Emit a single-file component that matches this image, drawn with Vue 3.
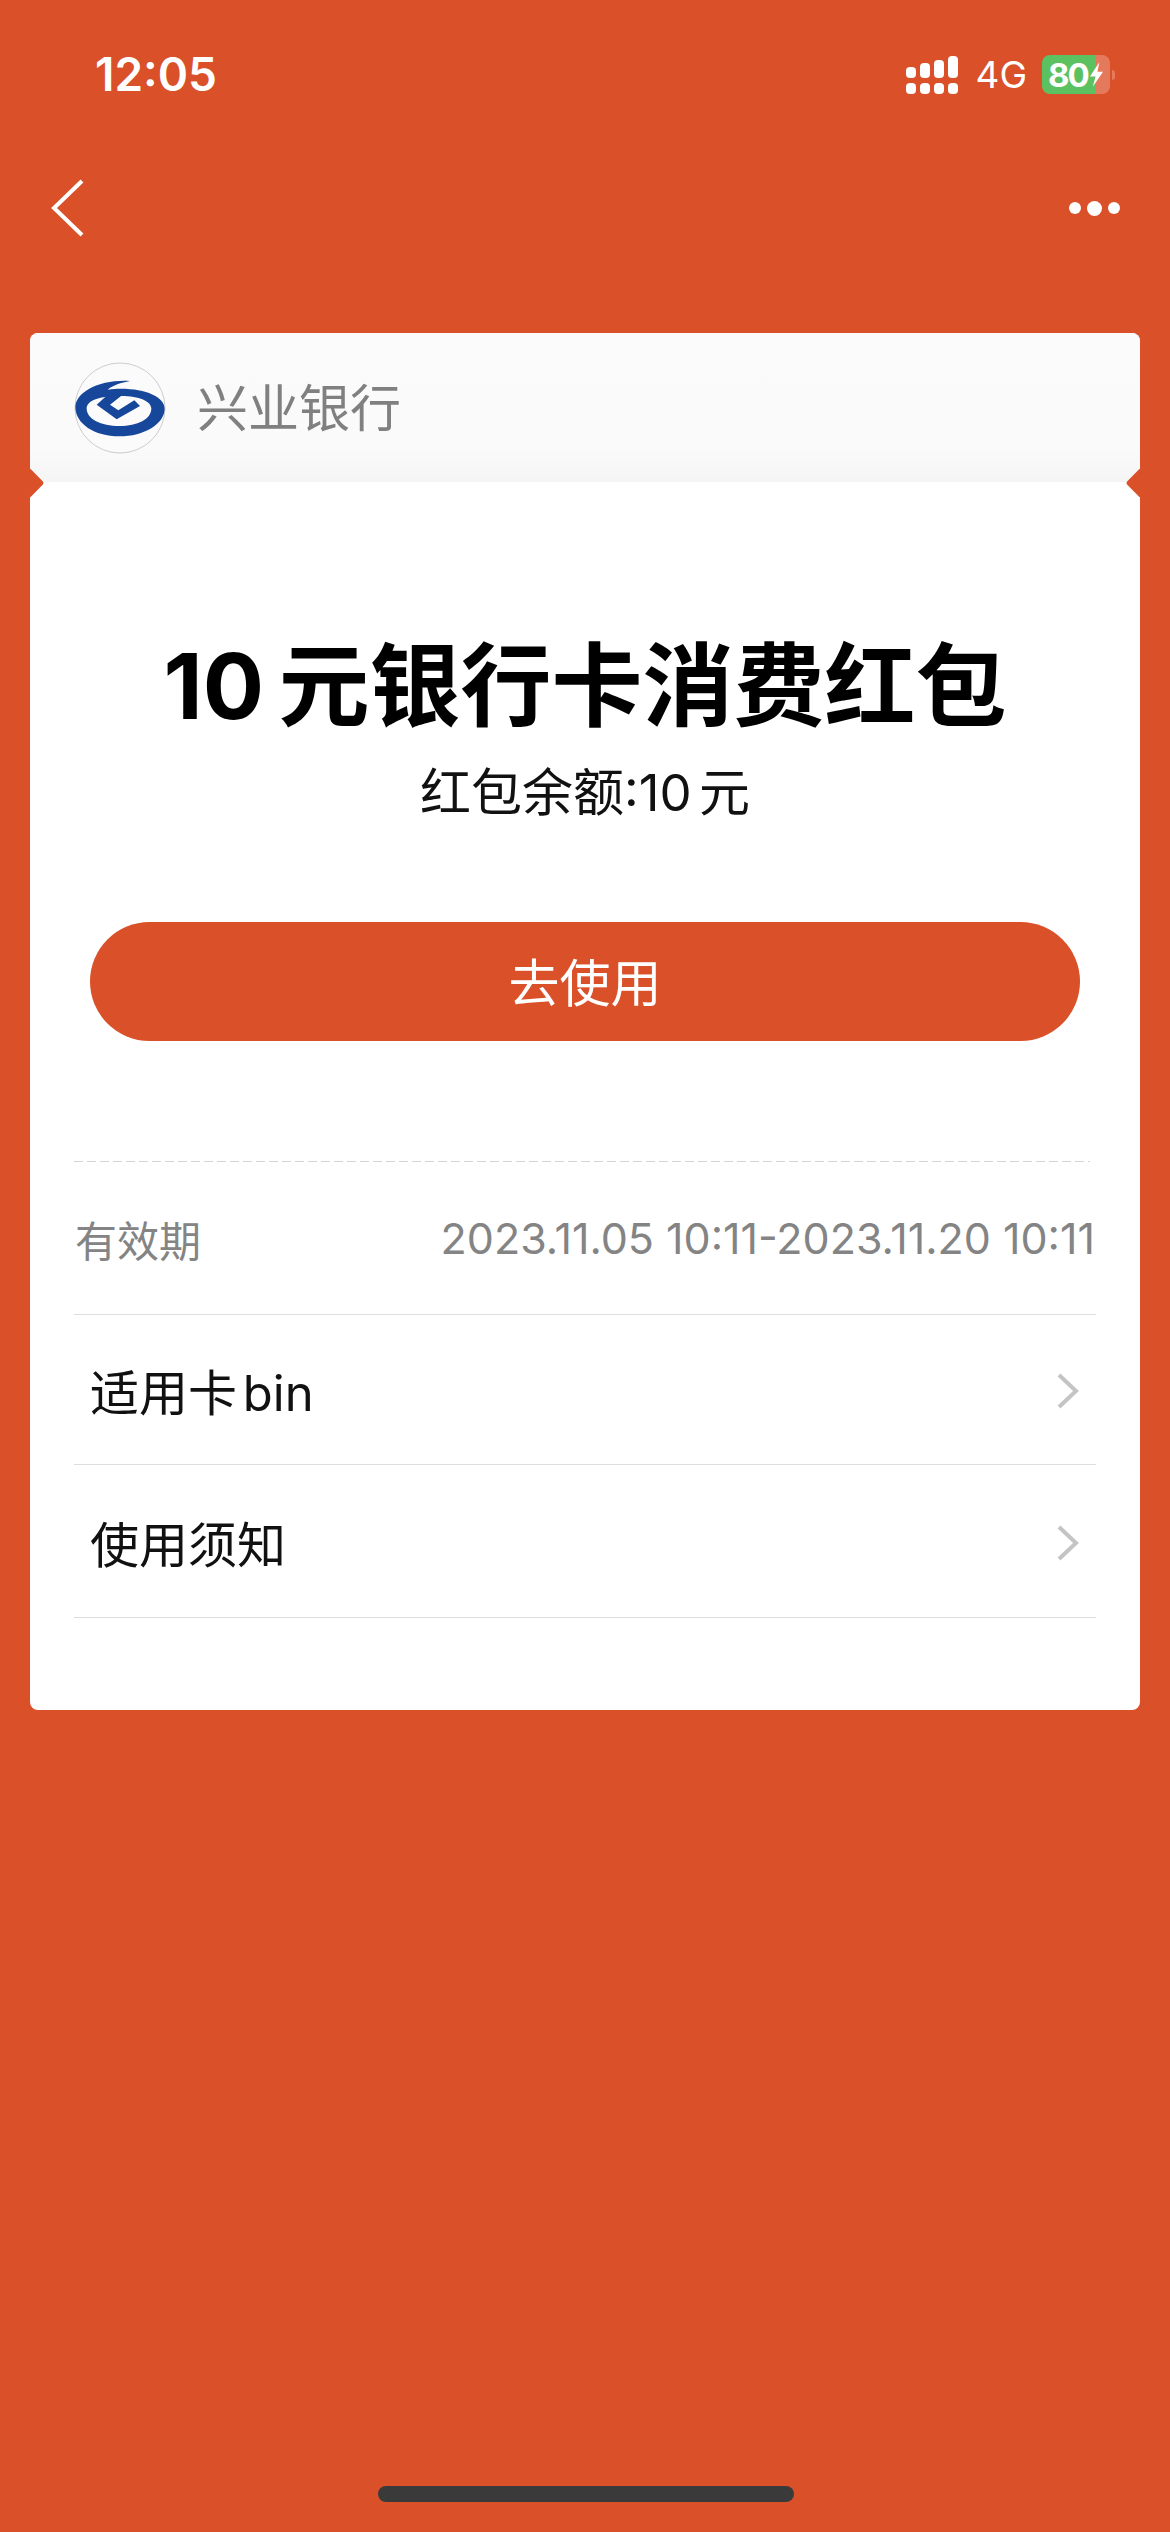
<script setup>
const upperBars = [11, 15, 18, 22];
const rows = [
  { label: '适用卡 bin' },
  { label: '使用须知' },
];
</script>

<template>
  <div class="page">
    <div class="status-bar">
      <span class="time">12:05</span>
      <div class="status-right">
        <div class="signal">
          <div v-for="(h, i) in upperBars" :key="i" class="signal-col">
            <i class="bar" :style="{ height: h + 'px' }"></i>
            <i class="bar dot"></i>
          </div>
        </div>
        <span class="network">4G</span>
        <div class="battery">
          <span class="battery-num">80</span>
          <svg class="bolt" width="15" height="25" viewBox="0 0 16 26">
            <path d="M11 0 L1 15 H7 L4 26 L15 10 H9 Z" fill="#fff" />
          </svg>
        </div>
        <i class="battery-nub"></i>
      </div>
    </div>

    <div class="nav">
      <svg width="36" height="60" viewBox="0 0 36 60" fill="none">
        <path d="M33 3 L5 30 L33 57" stroke="#fff" stroke-width="4" />
      </svg>
      <div class="more">
        <i class="more-dot"></i>
        <i class="more-dot big"></i>
        <i class="more-dot"></i>
      </div>
    </div>

    <div class="card">
      <div class="card-head">
        <svg class="logo" width="92" height="92" viewBox="24 20 276 276">
          <circle cx="162" cy="158" r="135" fill="#fbfbfb" stroke="#b5b5b5" stroke-width="2" />
          <path
            d="M28 155 C30 110 100 72 192 77 C165 82 140 90 125 103 C140 101 150 100 165 100 C240 100 296 125 296 160 C296 205 235 243 160 243 C85 243 28 205 28 155 Z M62 160 C62 190 105 212 160 212 C215 212 256 190 256 160 C256 138 220 122 165 122 C100 122 62 135 62 160 Z"
            fill="#17479a"
            fill-rule="evenodd"
          />
          <path d="M130 114 L170 118 L132 148 L157 165 L205 135 L222 152 L152 192 L92 148 Z" fill="#17479a" />
        </svg>
        <span class="bank-name">兴业银行</span>
      </div>

      <div class="card-body">
        <h1 class="title"><span class="title-num">10 </span>元银行卡消费红包</h1>
        <p class="balance">红包余额:10 元</p>
        <button class="use-btn">去使用</button>
        <div class="dashed"></div>
        <div class="row validity">
          <span class="validity-label">有效期</span>
          <span class="validity-date">2023.11.05 10:11-2023.11.20 10:11</span>
        </div>
        <div v-for="row in rows" :key="row.label" class="row link">
          <span>{{ row.label }}</span>
          <svg class="chevron" width="22" height="36" viewBox="0 0 22 36" fill="none">
            <path d="M2 2 L19 18 L2 34" stroke="#c4c4c4" stroke-width="4" />
          </svg>
        </div>
      </div>
    </div>

    <div class="home-indicator"></div>
  </div>
</template>

<style>
html,
body {
  margin: 0;
  background: #d95029;
}
</style>

<style scoped>
.page {
  width: 1170px;
  height: 2532px;
  background: #d95029;
  position: relative;
  overflow: hidden;
  font-family: Inter, "Noto Sans CJK SC", sans-serif;
}

.status-bar {
  height: 148px;
  padding: 0 55px 0 95px;
  box-sizing: border-box;
  display: flex;
  justify-content: space-between;
  align-items: flex-start;
  color: #fff;
}

.time {
  margin-top: 47px;
  font-size: 46px;
  line-height: 54px;
  font-weight: 600;
}

.status-right {
  display: flex;
  align-items: center;
  margin-top: 55px;
}

.signal {
  display: flex;
  gap: 4px;
  margin-right: 17px;
  height: 38px;
  align-items: flex-end;
}

.signal-col {
  display: flex;
  flex-direction: column;
  gap: 5px;
}

.bar {
  display: block;
  width: 10px;
  background: #fff;
  border-radius: 4px;
}

.bar.dot {
  height: 11px;
}

.network {
  font-size: 37px;
  line-height: 38px;
  margin-right: 15px;
}

.battery {
  width: 68px;
  height: 39px;
  border-radius: 8px;
  background: linear-gradient(90deg, #5cc160 0 79%, #e5795c 79%);
  display: flex;
  align-items: center;
  padding-left: 6px;
  box-sizing: border-box;
  gap: 1px;
}

.battery-num {
  font-size: 33px;
  line-height: 38px;
  font-weight: 700;
  letter-spacing: -2px;
}

.bolt {
  flex: none;
}

.battery-nub {
  width: 3px;
  height: 10px;
  margin-left: 2px;
  background: #e5795c;
  border-radius: 0 3px 3px 0;
}

.nav {
  height: 185px;
  display: flex;
  justify-content: space-between;
  padding: 30px 50px 0 49px;
  box-sizing: border-box;
}

.more {
  display: flex;
  align-items: center;
  gap: 6px;
  height: 60px;
}

.more-dot {
  width: 12px;
  height: 12px;
  border-radius: 50%;
  background: #fff;
}

.more-dot.big {
  width: 15px;
  height: 15px;
}

.card {
  margin: 0 30px;
  height: 1377px;
  border-radius: 8px;
  background: #fff;
  position: relative;
  overflow: hidden;
}

.card::before,
.card::after {
  content: "";
  position: absolute;
  top: 139px;
  width: 22px;
  height: 22px;
  background: #d95029;
  transform: rotate(45deg);
  border-radius: 3px;
  z-index: 1;
}

.card::before {
  left: -12px;
}

.card::after {
  right: -12px;
}

.card-head {
  height: 149px;
  background: linear-gradient(180deg, #fbfbfb 0, #fafafa 78%, #f5f5f5 100%);
  display: flex;
  align-items: center;
  padding: 0 0 0 44px;
  box-sizing: border-box;
  gap: 31px;
}

.logo {
  margin-top: 1px;
  flex: none;
}

.bank-name {
  margin-top: 2px;
  font-size: 51px;
  line-height: 60px;
  color: #808080;
}

.card-body {
  padding: 0 44px;
}

.title {
  margin: 149px 0 0;
  font-size: 91px;
  line-height: 110px;
  font-weight: 700;
  color: #000;
  text-align: center;
  white-space: nowrap;
}

.title-num {
  word-spacing: -7px;
}

.balance {
  margin: 21px 0 0;
  font-size: 51px;
  line-height: 62px;
  color: #111;
  text-align: center;
  word-spacing: -7px;
}

.use-btn {
  display: block;
  width: 990px;
  height: 119px;
  margin: 98px 0 0 16px;
  padding: 0 0 4px;
  border: 0;
  border-radius: 60px;
  background: #d95029;
  color: #fff;
  font-family: inherit;
  font-size: 51px;
}

.dashed {
  width: 1016px;
  height: 1px;
  margin: 120px 0 0;
  background: repeating-linear-gradient(90deg, #d4d4d4 0 9px, transparent 9px 13px);
}

.row {
  width: 1022px;
  display: flex;
  justify-content: space-between;
  align-items: center;
  border-bottom: 1px solid #dedede;
  box-sizing: border-box;
}

.validity {
  height: 153px;
  padding: 0 1px 0 1px;
}

.validity-label {
  font-size: 42px;
  color: #848484;
}

.validity-date {
  font-size: 43px;
  color: #848484;
  white-space: nowrap;
}

.link {
  height: 150px;
  padding: 0 17px 0 16px;
  font-size: 49px;
  color: #111;
  word-spacing: -8px;
}

.link:last-child {
  height: 153px;
}

.chevron {
  margin-top: 3px;
}

.home-indicator {
  position: absolute;
  left: 378px;
  bottom: 30px;
  width: 416px;
  height: 16px;
  border-radius: 8px;
  background: #3a3a3a;
}
</style>
